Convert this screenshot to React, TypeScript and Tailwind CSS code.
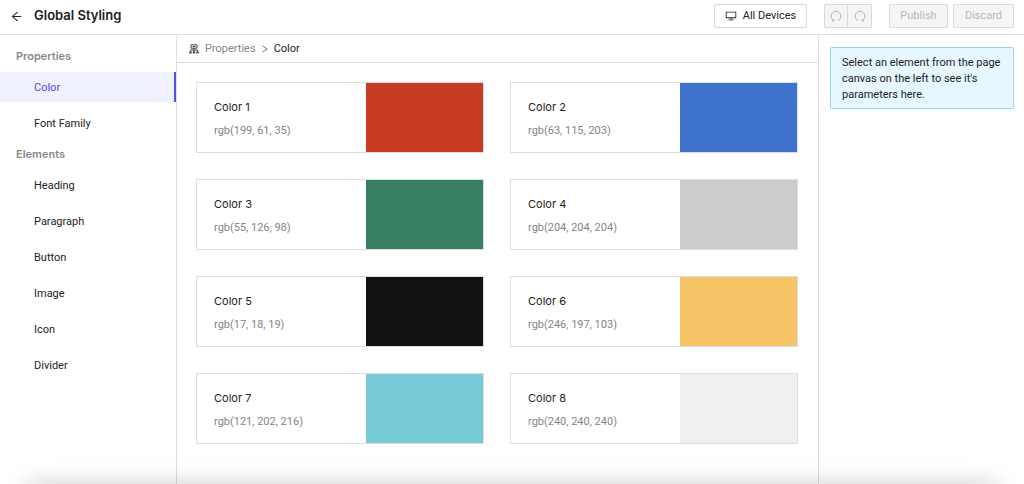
import { AiOutlineArrowLeft, AiOutlineDesktop } from 'react-icons/ai'
import { useState } from 'react'

const COLORS = [
  { name: 'Color 1', value: 'rgb(199, 61, 35)' },
  { name: 'Color 2', value: 'rgb(63, 115, 203)' },
  { name: 'Color 3', value: 'rgb(55, 126, 98)' },
  { name: 'Color 4', value: 'rgb(204, 204, 204)' },
  { name: 'Color 5', value: 'rgb(17, 18, 19)' },
  { name: 'Color 6', value: 'rgb(246, 197, 103)' },
  { name: 'Color 7', value: 'rgb(121, 202, 216)' },
  { name: 'Color 8', value: 'rgb(240, 240, 240)' },
]

const SECTIONS = [
  { title: 'Properties', items: ['Color', 'Font Family'] },
  { title: 'Elements', items: ['Heading', 'Paragraph', 'Button', 'Image', 'Icon', 'Divider'] },
]

function UndoIcon({ className = '' }: { className?: string }) {
  return (
    <svg
      viewBox="0 0 12 12"
      className={`size-3 ${className}`}
      fill="none"
      stroke="currentColor"
      strokeWidth="1"
      aria-hidden="true"
    >
      <path d="M8.2 10.6A4.9 4.9 0 1 0 3.8 10.6" />
      <path d="M1.8 10.9h2.3V9" />
    </svg>
  )
}

function TreeIcon() {
  return (
    <svg viewBox="0 0 10 10" className="size-2.5" fill="none" stroke="#444" aria-hidden="true">
      <path d="M2 .8h6v3.4H2zM3.5 2.5h3M5 4.2v4M1.5 7.5V6h7v1.5" />
      <path d="M.3 8.5h2.4M3.8 8.5h2.4M7.3 8.5h2.4" strokeWidth="2" />
    </svg>
  )
}

function Header() {
  return (
    <header className="flex h-[35px] items-center border-b border-[#dedede] pr-2.5 pb-0.5 pl-2.5">
      <button type="button" aria-label="Back" className="text-[13px] text-[#222]">
        <AiOutlineArrowLeft />
      </button>
      <h1 className="ml-[11px] font-['Inter',sans-serif] text-[13px] font-semibold text-[#1c1c1c]">
        Global Styling
      </h1>
      <div className="ml-auto flex items-center">
        <button
          type="button"
          className="flex h-6 w-[93px] items-center justify-center gap-1.5 rounded-xs border border-[#d9d9d9] text-[#222]"
        >
          <AiOutlineDesktop className="text-xs" />
          All Devices
        </button>
        <div className="ml-[17px] flex text-[#b4b4b4]">
          <button
            type="button"
            disabled
            aria-label="Undo"
            className="flex h-6 w-6 items-center justify-center rounded-l-xs border border-[#d9d9d9] bg-[#f5f5f5]"
          >
            <UndoIcon />
          </button>
          <button
            type="button"
            disabled
            aria-label="Redo"
            className="flex h-6 w-6 items-center justify-center rounded-r-xs border border-l-0 border-[#d9d9d9] bg-[#f5f5f5]"
          >
            <UndoIcon className="-scale-x-100" />
          </button>
        </div>
        <button
          type="button"
          disabled
          className="ml-[17px] h-6 w-[59px] rounded-xs border border-[#d9d9d9] bg-[#f5f5f5] text-[#b8b8b8]"
        >
          Publish
        </button>
        <button
          type="button"
          disabled
          className="ml-[5px] h-6 w-[61px] rounded-xs border border-[#d9d9d9] bg-[#f5f5f5] text-[#b8b8b8]"
        >
          Discard
        </button>
      </div>
    </header>
  )
}

interface SidebarProps {
  active: string
  onSelect: (item: string) => void
}

function Sidebar({ active, onSelect }: SidebarProps) {
  return (
    <nav className="w-[177px] shrink-0 border-r border-[#dedede] pt-[5px]">
      {SECTIONS.map((section) => (
        <section key={section.title}>
          <h2 className="flex h-8 items-center pl-4 font-['Inter',sans-serif] text-[11px] font-semibold text-[#8a8a8a]">
            {section.title}
          </h2>
          <ul className="flex flex-col gap-1.5">
            {section.items.map((item) => (
              <li key={item}>
                <button
                  type="button"
                  onClick={() => onSelect(item)}
                  className={`h-[30px] w-full border-r-2 pt-0.5 pl-[34px] text-left ${
                    item === active
                      ? 'border-[#5451e6] bg-[#eff1fe] text-[#4d49ee]'
                      : 'border-transparent text-[#222]'
                  }`}
                >
                  {item}
                </button>
              </li>
            ))}
          </ul>
        </section>
      ))}
    </nav>
  )
}

function ColorCard({ name, value }: { name: string; value: string }) {
  return (
    <li className="flex h-[71px] border border-[#dedede]">
      <div className="flex-1 pt-3 pl-[17px] leading-6">
        <p className="font-['Inter',sans-serif] text-[11px] text-[#222]">{name}</p>
        <p className="text-[#858585]">{value}</p>
      </div>
      <div className="w-[117px]" style={{ backgroundColor: value }} />
    </li>
  )
}

export default function App() {
  const [active, setActive] = useState('Color')

  return (
    <div className="flex min-h-screen flex-col bg-white font-['Roboto',sans-serif] text-[11px] text-[#222]">
      <Header />
      <div className="flex flex-1">
        <Sidebar active={active} onSelect={setActive} />
        <main className="min-w-0 flex-1">
          <div className="flex h-7 items-center border-b border-[#dedede] pl-3">
            <TreeIcon />
            <a href="#" className="ml-1.5 pt-0.5 text-[#858585]">
              Properties
            </a>
            <svg
              viewBox="0 0 6 8"
              className="mx-1.5 h-2 w-1.5"
              fill="none"
              stroke="#777"
              aria-hidden="true"
            >
              <path d="M.5 .8 5.2 4 .5 7.2" />
            </svg>
            <span className="pt-0.5">{active}</span>
          </div>
          <ul className="grid grid-cols-2 gap-[26px] pt-[19px] pr-5 pb-10 pl-[19px]">
            {COLORS.map((color) => (
              <ColorCard key={color.name} {...color} />
            ))}
          </ul>
        </main>
        <aside className="w-[206px] shrink-0 border-l border-[#dedede] pt-3 pr-2.5 pl-[11px]">
          <p className="rounded-xs border border-[#91d5ff] bg-[#e6f7ff] px-[11px] pt-[7px] pb-[5px] leading-4">
            Select an element from the page canvas on the left to see it&apos;s parameters here.
          </p>
        </aside>
      </div>
      {/* soft shadow rising from the lower edge of the window */}
      <div className="pointer-events-none fixed inset-x-7 top-full h-10 shadow-[0_0_24px_rgba(0,0,0,0.2)]" />
    </div>
  )
}
